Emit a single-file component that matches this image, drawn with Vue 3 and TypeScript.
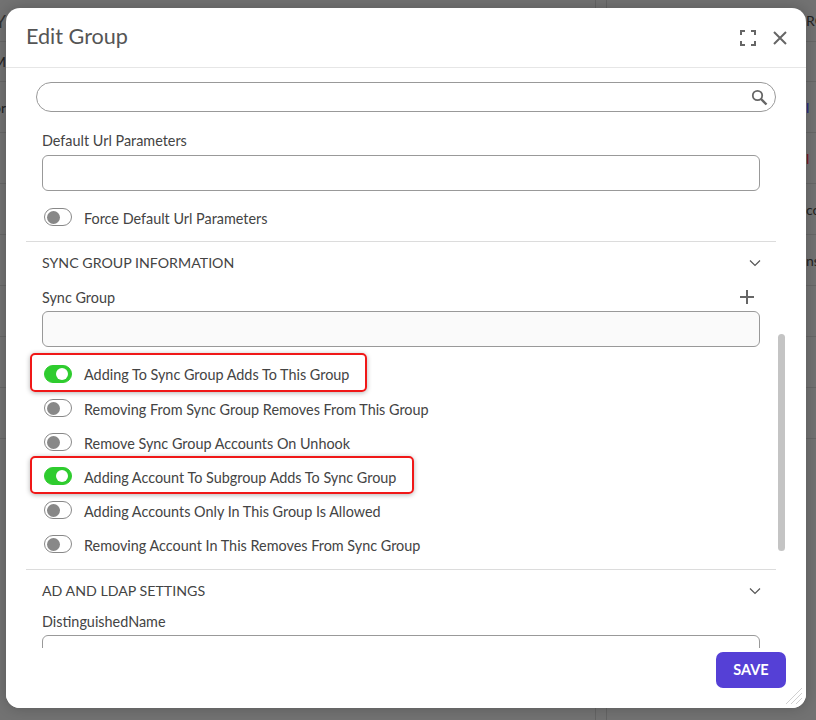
<template>
  <div class="page">
    <div class="backdrop">
      <div class="bg-row" v-for="(row, i) in bgRows" :key="i" :style="{ height: row.h + 'px' }">
        <span class="bg-left" :class="{ big: row.left === 'Y' }">{{ row.left }}</span>
        <span class="bg-right" :style="{ color: row.color }">{{ row.right }}</span>
      </div>
    </div>

    <div class="modal">
      <header class="modal-header">
        <h2 class="modal-title">Edit Group</h2>
        <div class="header-actions">
          <svg width="16" height="16" viewBox="0 0 16 16" fill="none" stroke="#666" stroke-width="2">
            <path d="M1 5V1h4M11 1h4v4M15 11v4h-4M5 15H1v-4" />
          </svg>
          <svg width="16" height="16" viewBox="0 0 16 16" fill="none" stroke="#666" stroke-width="2">
            <path d="M2 2l12 12M14 2L2 14" />
          </svg>
        </div>
      </header>

      <div class="modal-body">
        <div class="search">
          <svg width="17" height="17" viewBox="0 0 17 17" fill="none" stroke="#666">
            <circle cx="6.5" cy="6.5" r="4.7" stroke-width="1.8" />
            <path d="M10 10l5.5 5.5" stroke-width="2.4" />
          </svg>
        </div>

        <div class="section first">
          <label class="field-label">Default Url Parameters</label>
          <div class="text-input"></div>
          <div class="toggle-row force">
            <span class="toggle"></span>
            <span class="toggle-text">Force Default Url Parameters</span>
          </div>
        </div>

        <div class="section sync">
          <div class="section-head">
            <span>SYNC GROUP INFORMATION</span>
            <svg width="12" height="8" viewBox="0 0 12 8" fill="none" stroke="#555" stroke-width="1.2"><path d="M1 1.5l5 5 5-5" /></svg>
          </div>
          <div class="label-row">
            <label class="field-label">Sync Group</label>
            <svg width="14" height="14" viewBox="0 0 14 14" fill="none" stroke="#666" stroke-width="2"><path d="M7 0v14M0 7h14" /></svg>
          </div>
          <div class="text-input filled"></div>
          <div class="toggles">
            <div
              v-for="item in syncToggles"
              :key="item.label"
              class="toggle-row"
              :class="{ marked: item.on }"
              :style="{ height: item.h + 'px' }"
            >
              <span class="toggle" :class="{ on: item.on }"></span>
              <span class="toggle-text">{{ item.label }}</span>
            </div>
          </div>
        </div>

        <div class="section ad">
          <div class="section-head">
            <span>AD AND LDAP SETTINGS</span>
            <svg width="12" height="8" viewBox="0 0 12 8" fill="none" stroke="#555" stroke-width="1.2"><path d="M1 1.5l5 5 5-5" /></svg>
          </div>
          <label class="field-label">DistinguishedName</label>
          <div class="text-input"></div>
        </div>

        <div class="scrollbar"></div>
      </div>

      <footer class="modal-footer">
        <button class="save-btn" type="button">SAVE</button>
      </footer>

      <svg class="resize-grip" width="18" height="18" viewBox="0 0 18 18" fill="none" stroke="#d0d0d0" stroke-width="1">
        <path d="M1 17L17 1M6 17L17 6M11 17l6-6" />
      </svg>
    </div>
  </div>
</template>

<script setup lang="ts">
const bgRows = [
  { h: 42, left: 'Y', right: 'RC' },
  { h: 40, left: 'M', right: '' },
  { h: 51, left: 'or', right: 'l', color: '#1a237e' },
  { h: 51, left: '', right: 'l', color: '#7a1020' },
  { h: 51, left: '', right: 'cc' },
  { h: 51, left: '', right: 'ns' },
  { h: 51, left: '', right: '' },
  { h: 51, left: '', right: '' },
  { h: 51, left: '', right: '' }
]

const syncToggles = [
  { label: 'Adding To Sync Group Adds To This Group', on: true, h: 35 },
  { label: 'Removing From Sync Group Removes From This Group', on: false, h: 34 },
  { label: 'Remove Sync Group Accounts On Unhook', on: false, h: 34 },
  { label: 'Adding Account To Subgroup Adds To Sync Group', on: true, h: 34 },
  { label: 'Adding Accounts Only In This Group Is Allowed', on: false, h: 34 },
  { label: 'Removing Account In This Removes From Sync Group', on: false, h: 34 }
]
</script>

<style>
html,
body {
  margin: 0;
  background: #717171;
}
</style>

<style scoped>
.page {
  position: relative;
  width: 816px;
  height: 720px;
  overflow: hidden;
  font-family: Lato, "Open Sans", sans-serif;
  color: #444;
}

.backdrop {
  height: 720px;
  background-color: #727272;
  background-image:
    linear-gradient(#646464, #646464),
    linear-gradient(#646464, #646464);
  background-size: 1px 100%, 1px 100%;
  background-position: 595px 0, 606px 0;
  background-repeat: no-repeat;
  font-size: 14px;
  color: #222;
}

.bg-row {
  box-sizing: border-box;
  display: flex;
  justify-content: space-between;
  align-items: center;
  border-bottom: 1px solid #666;
}

.bg-left {
  display: flex;
  justify-content: flex-end;
  width: 6px;
  overflow: hidden;
}

.bg-left.big {
  font-size: 18px;
  color: #333;
}

.bg-right {
  width: 10px;
  overflow: hidden;
  white-space: nowrap;
}

.modal {
  position: absolute;
  left: 6px;
  top: 8px;
  width: 800px;
  height: 700px;
  display: flex;
  flex-direction: column;
  background: #fff;
  border-radius: 14px;
  box-shadow: 0 0 14px rgba(0, 0, 0, 0.22);
  overflow: hidden;
}

.modal-header {
  box-sizing: border-box;
  height: 60px;
  flex: none;
  display: flex;
  align-items: center;
  justify-content: space-between;
  padding: 0 18px 0 20px;
  border-bottom: 1px solid #e6e6e6;
}

.modal-title {
  margin: 0 0 4px;
  font-size: 21.6px;
  font-weight: 400;
  color: #555;
}

.header-actions {
  display: flex;
  align-items: center;
  gap: 16px;
  margin-top: 1px;
}

.modal-body {
  position: relative;
  flex: 1;
  min-height: 0;
  overflow: hidden;
  padding: 14px 30px 0 20px;
}

.search {
  box-sizing: border-box;
  display: flex;
  align-items: center;
  justify-content: flex-end;
  width: 740px;
  margin-left: 10px;
  height: 30px;
  padding-right: 7px;
  border: 1px solid #999;
  border-radius: 15px;
}

.section {
  border-top: 1px solid #dcdcdc;
  padding: 0 16px;
}

.section.first {
  border-top: 0;
  padding-top: 19px;
  padding-bottom: 15px;
}

.field-label {
  display: block;
  font-size: 14.4px;
  line-height: 20px;
  height: 18px;
  color: #444;
}

.text-input {
  box-sizing: border-box;
  width: 718px;
  height: 36px;
  margin-top: 6px;
  border: 1px solid #999;
  border-radius: 6px;
}

.text-input.filled {
  background: #fafafa;
  margin-top: 5px;
}

.toggle-row {
  position: relative;
  display: flex;
  align-items: center;
  width: max-content;
  padding-left: 2px;
  gap: 12px;
  font-size: 14.4px;
  color: #444;
}

.toggle-text {
  margin-top: 2px;
}

.force {
  height: 18px;
  margin-top: 17px;
}

.toggle {
  box-sizing: border-box;
  display: flex;
  align-items: center;
  width: 28px;
  height: 18px;
  padding: 0 1.5px;
  flex: none;
  border: 1px solid #888;
  border-radius: 9px;
  background: #fff;
}

.toggle::before {
  content: "";
  width: 13px;
  height: 13px;
  border-radius: 50%;
  background: #888;
}

.toggle.on {
  justify-content: flex-end;
  padding: 0 3px;
  border-color: #2ecc2e;
  background: #2ecc2e;
}

.toggle.on::before {
  width: 12px;
  height: 12px;
  background: #fff;
}

.marked::after {
  content: "";
  position: absolute;
  left: -12px;
  right: -18px;
  top: -3px;
  bottom: -1px;
  border: 2px solid #f01818;
  border-radius: 5px;
  box-shadow: 0 1px 5px rgba(0, 0, 0, 0.3);
}

.section-head {
  display: flex;
  align-items: center;
  justify-content: space-between;
  width: 718px;
  height: 18px;
  padding-top: 12px;
  font-size: 14.2px;
  line-height: 20px;
  color: #444;
}

.section-head svg {
  margin-right: -1px;
}

.sync {
  padding-bottom: 8px;
}

.label-row {
  display: flex;
  align-items: center;
  justify-content: space-between;
  width: 712px;
  margin-top: 16px;
  height: 18px;
}

.toggles {
  padding-top: 9px;
}

.ad .field-label {
  margin-top: 12px;
}

.ad .text-input {
  height: 60px;
  margin-top: 5px;
}

.scrollbar {
  position: absolute;
  left: 772px;
  top: 266px;
  width: 7px;
  height: 217px;
  border-radius: 4px;
  background: #c4c4c4;
}

.modal-footer {
  position: absolute;
  left: 0;
  right: 0;
  bottom: 0;
  height: 60px;
  display: flex;
  justify-content: flex-end;
  align-items: flex-start;
  padding-right: 20px;
  background: #fff;
}

.save-btn {
  width: 70px;
  height: 36px;
  margin-top: 4px;
  padding: 0 0 1px;
  border: 0;
  border-radius: 7px;
  background: #5540d6;
  color: #fff;
  font-family: inherit;
  font-size: 14.5px;
  font-weight: 700;
}

.resize-grip {
  position: absolute;
  right: 3px;
  bottom: 3px;
}
</style>
